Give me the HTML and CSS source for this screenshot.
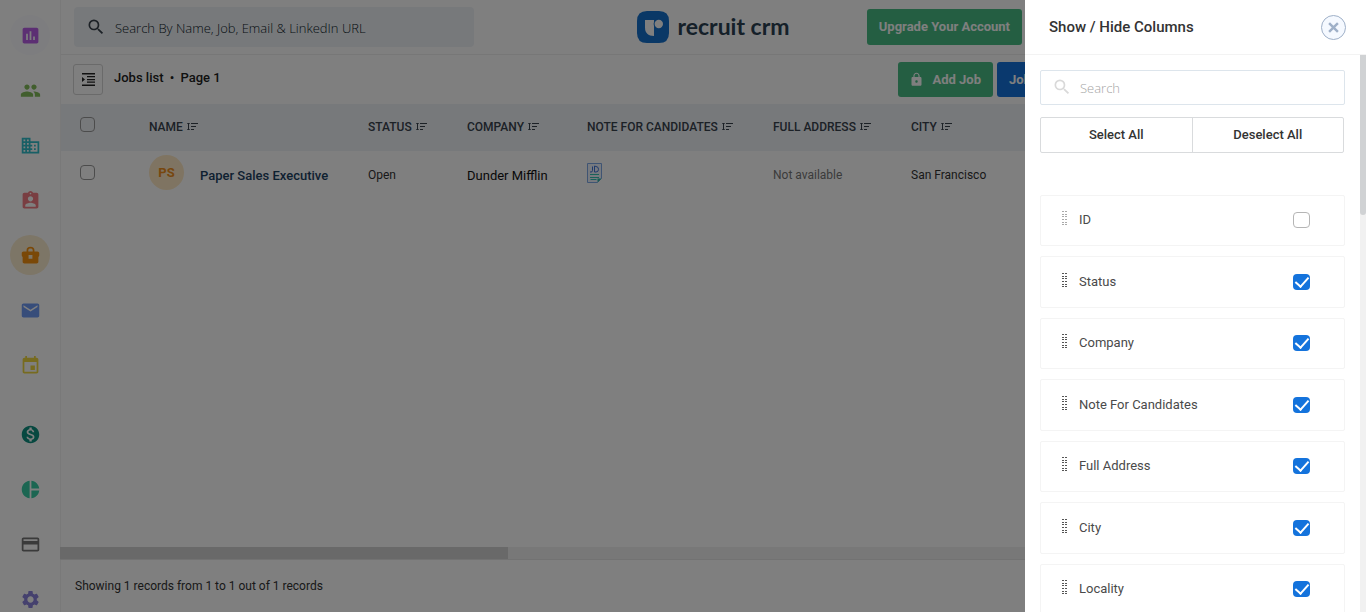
FILE: index.html
```html
<!DOCTYPE html>
<html lang="en">
<head>
<meta charset="utf-8">
<title>Jobs list</title>
<link rel="stylesheet" href="styles.css">
</head>
<body>
<svg class="defs" aria-hidden="true">
  <symbol id="i-sort" viewBox="0 0 11 9"><path d="M1.500 1v7M.3 1.500h2.400M.3 7.500h2.400M4 1.500h7M4 4.500h5M4 7.500h3" fill="none" stroke="currentColor"/></symbol>
  <symbol id="i-search" viewBox="0 0 24 24"><path d="M15.500 14h-.79l-.28-.27A6.471 6.471 0 0 0 16 9.500 6.500 6.500 0 1 0 9.500 16c1.610 0 3.090-.59 4.230-1.570l.27.28v.79l5 4.990L20.490 19l-4.990-5zm-6 0C7.010 14 5 11.990 5 9.500S7.010 5 9.500 5 14 7.010 14 9.500 11.990 14 9.500 14z"/></symbol>
  <symbol id="i-grip" viewBox="0 0 6 14"><path d="M0 0h2v1H0zM3 0h2v1H3zM0 3h2v1H0zM3 3h2v1H3zM0 5h2v1H0zM3 5h2v1H3zM0 8h2v1H0zM3 8h2v1H3zM0 11h2v1H0zM3 11h2v1H3zM0 13h2v1H0zM3 13h2v1H3z"/></symbol>
</svg>
<div class="app">
  <nav class="sidebar" aria-label="Main">
    <a href="#" class="nav-item tint" aria-label="Dashboard"><svg class="c-purple" viewBox="0 0 24 24"><path d="M19 3H5c-1.100 0-2 .9-2 2v14c0 1.100.9 2 2 2h14c1.100 0 2-.9 2-2V5c0-1.100-.9-2-2-2zM9 17H7v-7h2v7zm4 0h-2V7h2v10zm4 0h-2v-4h2v4z"/></svg></a>
    <a href="#" class="nav-item" aria-label="Candidates"><svg class="c-green" viewBox="0 0 24 24"><path d="M16 11c1.660 0 2.990-1.340 2.990-3S17.660 5 16 5s-3 1.340-3 3 1.340 3 3 3zm-8 0c1.660 0 2.990-1.340 2.990-3S9.660 5 8 5 5 6.340 5 8s1.340 3 3 3zm0 2c-2.330 0-7 1.170-7 3.500V19h14v-2.500c0-2.330-4.670-3.500-7-3.500zm8 0c-.29 0-.62.020-.97.050 1.160.84 1.970 1.970 1.970 3.450V19h6v-2.500c0-2.330-4.670-3.500-7-3.500z"/></svg></a>
    <a href="#" class="nav-item" aria-label="Companies"><svg class="c-cyan" viewBox="0 0 24 24"><path d="M12 7V3H2v18h20V7H12zM6 19H4v-2h2v2zm0-4H4v-2h2v2zm0-4H4V9h2v2zm0-4H4V5h2v2zm4 12H8v-2h2v2zm0-4H8v-2h2v2zm0-4H8V9h2v2zm0-4H8V5h2v2zm10 12h-8v-2h2v-2h-2v-2h2v-2h-2V9h8v10zm-2-8h-2v2h2v-2zm0 4h-2v2h2v-2z"/></svg></a>
    <a href="#" class="nav-item" aria-label="Contacts"><svg class="c-red" viewBox="0 0 24 24"><path d="M19 3h-4.180C14.400 1.840 13.300 1 12 1s-2.400.84-2.820 2H5c-1.100 0-2 .9-2 2v14c0 1.100.9 2 2 2h14c1.100 0 2-.9 2-2V5c0-1.100-.9-2-2-2zm-7 0c.55 0 1 .45 1 1s-.45 1-1 1-1-.45-1-1 .45-1 1-1zm0 4c1.660 0 3 1.340 3 3s-1.340 3-3 3-3-1.340-3-3 1.340-3 3-3zm6 12H6v-1.400c0-2 4-3.100 6-3.100s6 1.100 6 3.100V19z"/></svg></a>
    <a href="#" class="nav-item current" aria-label="Jobs" aria-current="page"><svg class="c-orange" viewBox="0 0 24 24"><path fill-rule="evenodd" d="M20 7.500h-3.500V6C16.500 3.500 15 2 12 2S7.500 3.500 7.500 6v1.500H4c-1.100 0-2 .9-2 2V12c0 .8.400 1.300 1 1.600V19c0 1.100.9 2 2 2h14c1.100 0 2-.9 2-2v-5.400c.6-.3 1-.8 1-1.600V9.500c0-1.100-.9-2-2-2zM9.500 6c0-1.300 1-2 2.500-2s2.500.7 2.500 2v1.500h-5V6zM9.800 11.500h4.400v4.200H9.800z"/></svg></a>
    <a href="#" class="nav-item" aria-label="Email"><svg class="c-blue" viewBox="0 0 24 24"><path d="M20 4H4c-1.100 0-1.990.9-1.990 2L2 18c0 1.100.9 2 2 2h16c1.100 0 2-.9 2-2V6c0-1.100-.9-2-2-2zm0 4l-8 5-8-5V6l8 5 8-5v2z"/></svg></a>
    <a href="#" class="nav-item" aria-label="Calendar"><svg class="c-yellow" viewBox="0 0 24 24"><path d="M17 12h-5v5h5v-5zM16 1v2H8V1H6v2H5c-1.110 0-1.990.9-1.990 2L3 19c0 1.100.89 2 2 2h14c1.100 0 2-.9 2-2V5c0-1.100-.9-2-2-2h-1V1h-2zm3 18H5V8h14v11z"/></svg></a>
    <a href="#" class="nav-item second" aria-label="Deals"><svg class="c-teal" viewBox="0 0 24 24"><path d="M12 2C6.480 2 2 6.480 2 12s4.480 10 10 10 10-4.480 10-10S17.520 2 12 2zm1.410 16.090V20h-2.670v-1.930c-1.710-.36-3.160-1.460-3.270-3.400h1.960c.1 1.050.82 1.870 2.650 1.870 1.960 0 2.400-.98 2.400-1.590 0-.83-.44-1.610-2.670-2.140-2.480-.6-4.180-1.620-4.180-3.670 0-1.720 1.390-2.840 3.110-3.210V4h2.670v1.950c1.860.45 2.790 1.860 2.850 3.390H14.300c-.05-1.110-.64-1.870-2.220-1.870-1.500 0-2.400.68-2.400 1.640 0 .84.65 1.390 2.670 1.910s4.180 1.390 4.180 3.910c-.01 1.830-1.380 2.830-3.120 3.160z"/></svg></a>
    <a href="#" class="nav-item" aria-label="Reports"><svg class="c-mint" viewBox="0 0 24 24"><path d="M11 2v20c-5.070-.5-9-4.790-9-10s3.930-9.500 9-10zm2.030 0v8.990H22c-.47-4.740-4.240-8.520-8.970-8.990zm0 11.010V22c4.740-.47 8.500-4.250 8.970-8.990h-8.970z"/></svg></a>
    <a href="#" class="nav-item" aria-label="Billing"><svg class="c-gray" viewBox="0 0 24 24"><path d="M20 4H4c-1.110 0-1.990.89-1.990 2L2 18c0 1.110.89 2 2 2h16c1.110 0 2-.89 2-2V6c0-1.110-.89-2-2-2zm0 14H4v-6h16v6zm0-10H4V6h16v2z"/></svg></a>
    <a href="#" class="nav-item" aria-label="Settings"><svg class="c-violet" viewBox="0 0 24 24"><path d="M19.140 12.940c.04-.3.060-.61.060-.94 0-.32-.02-.64-.07-.94l2.030-1.580c.18-.14.23-.41.12-.61l-1.920-3.320c-.12-.22-.37-.29-.59-.22l-2.390.96c-.5-.38-1.030-.7-1.620-.94l-.36-2.540c-.04-.24-.24-.41-.48-.41h-3.840c-.24 0-.43.17-.47.41l-.36 2.540c-.59.24-1.130.57-1.620.94l-2.390-.96c-.22-.08-.47 0-.59.22L2.740 8.870c-.12.21-.08.47.12.61l2.030 1.580c-.05.3-.09.63-.09.94s.02.64.07.94l-2.030 1.580c-.18.14-.23.41-.12.61l1.920 3.320c.12.22.37.29.59.22l2.390-.96c.5.38 1.030.7 1.620.94l.36 2.540c.05.24.24.41.48.41h3.840c.24 0 .44-.17.47-.41l.36-2.540c.59-.24 1.130-.56 1.620-.94l2.390.96c.22.080.47 0 .59-.22l1.920-3.320c.12-.22.070-.47-.12-.61l-2.010-1.580zM12 15.600c-1.980 0-3.600-1.620-3.600-3.600s1.620-3.600 3.600-3.600 3.600 1.620 3.600 3.600-1.620 3.600-3.600 3.600z"/></svg></a>
  </nav>

  <div class="main">
    <header class="topbar">
      <label class="global-search"><svg><use href="#i-search"/></svg><input type="search" placeholder="Search By Name, Job, Email &amp; LinkedIn URL" aria-label="Search records"></label>
      <a href="#" class="brand"><svg viewBox="0 0 32 32" aria-hidden="true"><path class="brand-bg" d="M10 0H22Q32 0 32 10V22Q32 32 22 32H10Q0 32 0 22V10Q0 0 10 0z"/><path class="brand-mark" d="M8 9h9v16c-6 0-9-3-9-8.500z"/><circle class="brand-bg" cx="21.800" cy="13" r="5.200"/><circle class="brand-mark" cx="21.800" cy="13" r="4.200"/></svg><span>recruit crm</span></a>
      <div class="topbar-end"><button class="btn btn-upgrade">Upgrade Your Account</button></div>
    </header>

    <div class="toolbar">
      <button class="icon-btn" aria-label="Toggle filters"><svg viewBox="0 0 13 13"><path d="M0 0h13v1.500H0zM5 3h8v1.300H5zM5 6h8v1.200H5zM5 8.500h8v1.200H5zM0 11.500h13V13H0zM0 4l3 2.500L0 9z"/></svg></button>
      <h1 class="page-title">Jobs list <span>•</span> Page 1</h1>
      <div class="actions">
        <button class="btn btn-add"><svg viewBox="0 0 24 24"><path d="M18 8h-1V6c0-2.760-2.240-5-5-5S7 3.240 7 6v2H6c-1.100 0-2 .9-2 2v10c0 1.100.9 2 2 2h12c1.100 0 2-.9 2-2V10c0-1.100-.9-2-2-2zm-6 9c-1.100 0-2-.9-2-2s.9-2 2-2 2 .9 2 2-.9 2-2 2zm3.100-9H8.900V6c0-1.710 1.390-3.100 3.100-3.100s3.100 1.390 3.100 3.100v2z"/></svg>Add Job</button>
        <button class="btn btn-board">Job Board</button>
      </div>
    </div>

    <div class="table-area">
      <table class="jobs">
        <colgroup><col class="w-check"><col class="w-name"><col class="w-status"><col class="w-company"><col class="w-note"><col class="w-address"><col></colgroup>
        <thead>
          <tr>
            <th class="check-cell"><input type="checkbox" class="box" aria-label="Select all jobs"></th>
            <th>NAME <svg><use href="#i-sort"/></svg></th>
            <th>STATUS <svg><use href="#i-sort"/></svg></th>
            <th>COMPANY <svg><use href="#i-sort"/></svg></th>
            <th>NOTE FOR CANDIDATES <svg><use href="#i-sort"/></svg></th>
            <th>FULL ADDRESS <svg><use href="#i-sort"/></svg></th>
            <th>CITY <svg><use href="#i-sort"/></svg></th>
          </tr>
        </thead>
        <tbody>
          <tr>
            <td class="check-cell"><input type="checkbox" class="box" aria-label="Select Paper Sales Executive"></td>
            <td><div class="job"><span class="avatar">PS</span><a href="#">Paper Sales Executive</a></div></td>
            <td>Open</td>
            <td class="company"><a href="#">Dunder Mifflin</a></td>
            <td><svg class="jd" viewBox="0 0 15 20" role="img" aria-label="Job description"><path d="M.5.5h14v15l-4 4H.5z" fill="#eef4ff" stroke="#7fa9e6"/><path d="M5.500 3.500v4q0 2-2.500 1.500M7.500 3v6h1.500q2.500 0 2.500-2.700T9 3.500z" fill="none" stroke="#3f72d6"/><path d="M3 11.500h9M3 14.500h9M3.500 16.500h6" stroke="#35c4b4" fill="none"/><path d="M10.500 19.500v-4h4z" fill="#2fb8a8"/></svg></td>
            <td class="muted">Not available</td>
            <td>San Francisco</td>
          </tr>
        </tbody>
      </table>
    </div>
    <div class="hscroll"><div class="hscroll-thumb"></div></div>
    <footer class="status">Showing 1 records from 1 to 1 out of 1 records</footer>
  </div>
</div>

<div class="backdrop"></div>

<aside class="drawer" role="dialog" aria-labelledby="drawer-title">
  <header class="drawer-head">
    <h2 id="drawer-title">Show / Hide Columns</h2>
    <button class="close" aria-label="Close"><svg viewBox="0 0 10 10"><path d="M1 1l8 8M9 1L1 9" fill="none" stroke="currentColor" stroke-width="2.200"/></svg></button>
  </header>
  <div class="drawer-body">
    <div class="drawer-content">
      <label class="column-search"><svg><use href="#i-search"/></svg><input type="search" placeholder="Search" aria-label="Search columns"></label>
      <div class="bulk"><button>Select All</button><button>Deselect All</button></div>
      <ul class="columns">
        <li class="locked"><svg><use href="#i-grip"/></svg><label for="c1">ID</label><input class="box" type="checkbox" id="c1"></li>
        <li><svg><use href="#i-grip"/></svg><label for="c2">Status</label><input class="box" type="checkbox" id="c2" checked></li>
        <li><svg><use href="#i-grip"/></svg><label for="c3">Company</label><input class="box" type="checkbox" id="c3" checked></li>
        <li><svg><use href="#i-grip"/></svg><label for="c4">Note For Candidates</label><input class="box" type="checkbox" id="c4" checked></li>
        <li><svg><use href="#i-grip"/></svg><label for="c5">Full Address</label><input class="box" type="checkbox" id="c5" checked></li>
        <li><svg><use href="#i-grip"/></svg><label for="c6">City</label><input class="box" type="checkbox" id="c6" checked></li>
        <li><svg><use href="#i-grip"/></svg><label for="c7">Locality</label><input class="box" type="checkbox" id="c7" checked></li>
      </ul>
    </div>
    <div class="vscroll"><div class="vscroll-thumb"></div></div>
  </div>
</aside>
</body>
</html>
```
FILE: styles.css
```css
* { box-sizing: border-box; }
body { margin: 0; font: 13px/16px Roboto, sans-serif; color: #333; overflow: hidden; }
button, input { font: inherit; margin: 0; }
button { cursor: pointer; }
a { text-decoration: none; color: inherit; }
svg { display: block; fill: currentColor; flex: none; }
h1, h2, ul { margin: 0; padding: 0; font: inherit; }
input::-webkit-search-cancel-button { display: none; }
.defs { width: 0; height: 0; position: absolute; }

.app { display: flex; height: 100vh; overflow: hidden; background: #fff; }

/* Sidebar */
.sidebar { flex: 0 0 60px; display: flex; flex-direction: column; align-items: center; gap: 15px; padding-top: 15px; }
.nav-item { flex: none; width: 40px; height: 40px; border-radius: 50%; display: grid; place-items: center; padding-left: 1px; }
.nav-item svg { width: 21px; height: 21px; }
.nav-item.second { margin-top: 14px; }
.nav-item.tint { background: #fafafe; }
.nav-item.current { background: #fbeccf; }
.c-purple { color: #b95fe6; }
.c-green { color: #82bd5b; }
.c-cyan { color: #30bfcb; }
.c-red { color: #f27c84; }
.c-orange { color: #f5910f; }
.c-blue { color: #6f9bf5; }
.c-yellow { color: #eed741; }
.c-teal { color: #0e9080; }
.c-mint { color: #38cda5; }
.c-gray { color: #757575; }
.c-violet { color: #8b82dc; }

/* Main area */
.main { flex: 1; min-width: 0; display: flex; flex-direction: column; border-left: 1px solid #f3f3f3; }
.topbar { flex: none; height: 55px; display: grid; grid-template-columns: 1fr auto 1fr; align-items: center; border-bottom: 1px solid #eee; }
.global-search { display: flex; align-items: center; gap: 8px; width: 400px; height: 40px; margin-left: 13px; padding: 0 12px; border-radius: 4px; background: #eff3f7; color: #38424d; }
.global-search svg { width: 20px; height: 20px; margin-bottom: 1px; margin-right: 1px; }
.global-search input { flex: 1; border: 0; padding: 2px 0 0; background: none; outline: 0; font: 300 13px/18px "Open Sans", sans-serif; }
.global-search input::placeholder { color: #0c1a28; }
.brand { display: flex; align-items: center; gap: 8px; color: #2b4152; font: 700 23px/28px Lato, sans-serif; }
.brand span { padding-bottom: 3px; }
.brand svg { width: 32px; height: 32px; }
.brand-bg { fill: #1470cc; }
.brand-mark { fill: #fff; }
.topbar-end { display: flex; justify-content: flex-end; padding-right: 344px; }
.btn { border: 0; border-radius: 3px; color: #fff; font-weight: 700; white-space: nowrap; }
.btn-upgrade { height: 36px; padding: 0 12px; background: #48bd85; }
.toolbar { flex: none; height: 49px; display: flex; align-items: center; padding: 0 249px 0 12px; gap: 11px; }
.icon-btn { width: 30px; height: 31px; padding: 0; display: grid; place-items: center; border: 1px solid #d4d4d4; border-radius: 3px; background: none; color: #222; }
.icon-btn svg { width: 13px; height: 13px; }
.page-title { font-weight: 500; color: #222; padding-bottom: 3px; }
.page-title span { margin: 0 3px; }
.actions { margin-left: auto; display: flex; gap: 4px; }
.btn-add { display: flex; align-items: center; gap: 8px; height: 35px; padding: 0 12px 0 11px; background: #48bd85; }
.btn-add svg { width: 15px; height: 15px; }
.btn-board { width: 120px; height: 35px; padding: 0 12px; text-align: left; background: #1473dc; }

/* Table */
.table-area { flex: 1; min-height: 0; overflow: hidden; }
.jobs { width: 100%; table-layout: fixed; border-collapse: collapse; white-space: nowrap; font-size: 12px; }
.w-check { width: 88px; }
.w-name { width: 219px; }
.w-status { width: 99px; }
.w-company { width: 120px; }
.w-note { width: 186px; }
.w-address { width: 138px; }
.jobs th { height: 47px; padding: 0 0 2px; text-align: left; font-weight: 500; background: #eff3f7; color: #38424d; }
.jobs th svg { display: inline-block; width: 11px; height: 9px; margin-left: 1px; }
.jobs td { height: 47px; padding: 0; }
.jobs .check-cell { padding-left: 19px; }
.box { appearance: none; display: block; width: 15px; height: 15px; border: 1px solid #b5b5b5; border-radius: 4px; background: #fff; }
.jobs .box { margin-bottom: 4px; background: none; border-color: #999; }
.job { display: flex; align-items: center; gap: 16px; font-size: 13px; color: #1d4263; font-weight: 500; }
.job a { padding-top: 3px; }
.avatar { width: 35px; height: 35px; margin-bottom: 4px; border-radius: 50%; display: grid; place-items: center; background: #ffe9c4; color: #ef8f1c; font-weight: 700; }
.jobs .company { padding-top: 3px; font-size: 13px; color: #111; }
.jd { width: 15px; height: 20px; margin-bottom: 3px; }
.jobs .muted { color: #777; }
.hscroll { flex: none; height: 13px; margin-left: -1px; background: #f1f1f1; border-bottom: 1px solid #e4e4e4; }
.hscroll-thumb { width: 34.300%; height: 12px; background: #d2d2d2; }
.status { flex: none; height: 52px; padding: 18px 14px; font-size: 12px; }

.backdrop { position: fixed; inset: 0; background: rgba(0, 0, 0, .5); }

/* Column drawer */
.drawer { position: fixed; top: 0; right: 0; bottom: 0; width: 341px; display: flex; flex-direction: column; background: #fff; }
.drawer-head { flex: none; height: 55px; display: flex; align-items: center; justify-content: space-between; padding: 0 20px 0 24px; border-bottom: 1px solid #f3f3f3; }
.drawer-head h2 { font-size: 15px; font-weight: 500; color: #333; }
.close { width: 25px; height: 25px; padding: 0; display: grid; place-items: center; border: 1px solid #9fb0c8; border-radius: 50%; background: #f5f9ff; color: #9fb0c8; }
.close svg { width: 11px; height: 11px; }
.drawer-body { flex: 1; min-height: 0; display: flex; overflow: hidden; }
.drawer-content { flex: 1; padding: 15px; }
.column-search { display: flex; align-items: center; gap: 8px; height: 35px; padding: 0 11px; border: 1px solid #dde5ec; border-radius: 2px; color: #d9d9d9; }
.column-search svg { width: 20px; height: 20px; margin-bottom: 2px; }
.column-search input { flex: 1; min-width: 0; padding: 1px 0 0; border: 0; outline: 0; background: none; font: 300 13px/18px "Open Sans", sans-serif; }
.column-search input::placeholder { color: #a4a4a4; }
.bulk { display: flex; margin-top: 12px; margin-right: 1px; border: 1px solid #d9dbdd; border-radius: 2px; }
.bulk button { flex: 1; height: 34px; padding: 0; border: 0; background: none; font-weight: 500; color: #333; }
.bulk button + button { border-left: 1px solid #d9dbdd; }
.columns { list-style: none; margin-top: 42px; display: grid; gap: 10px; }
.columns li { display: flex; align-items: center; height: 51px; padding: 0 34px 2px 21px; border: 1px solid #f4f4f4; border-radius: 2px; }
.columns li:nth-child(even) { height: 52px; padding-bottom: 1px; }
.columns li svg { width: 6px; height: 14px; margin-bottom: 3px; color: #555; }
.columns .locked svg { color: #aaa; }
.columns label { flex: 1; padding-left: 11px; color: #4a4a4a; }
.columns .box { width: 17px; height: 16px; }
.columns .box:checked { display: grid; place-items: center; border: 0; background: #1473dc; }
.columns .box:checked::after { content: ""; width: 6px; height: 11px; margin-bottom: 3px; border: solid #fff; border-width: 0 2px 2px 0; transform: rotate(42deg); }
.vscroll { flex: none; width: 6px; background: #f1f1f1; }
.vscroll-thumb { height: 160px; border-radius: 0 0 3px 3px; background: #d0d2d4; }
```
